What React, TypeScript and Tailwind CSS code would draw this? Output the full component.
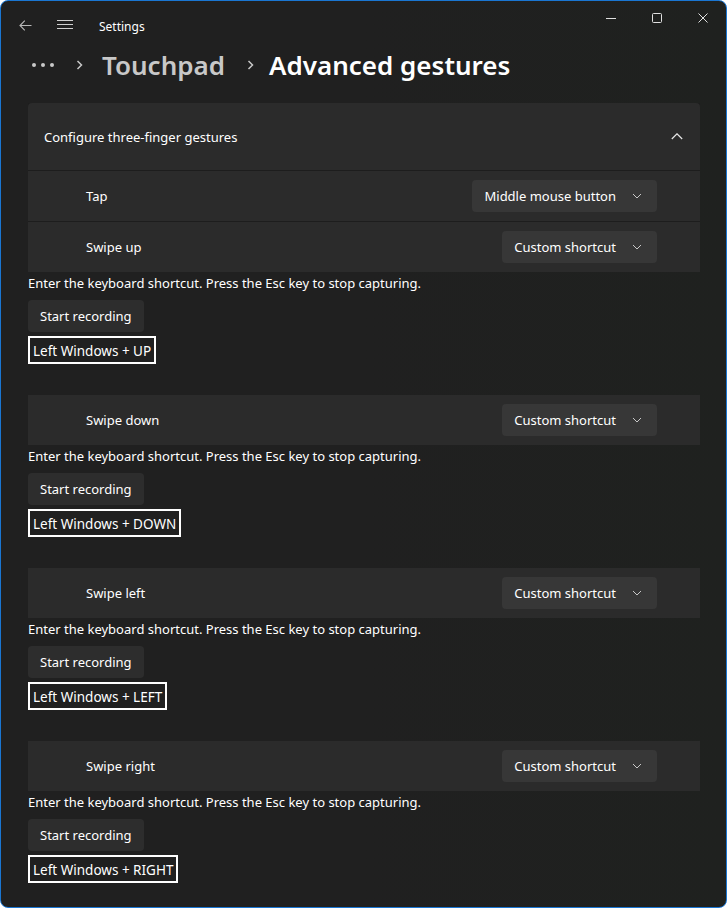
import React from "react";

const FONT = { fontFamily: '"Noto Sans", "Open Sans", sans-serif' };

function ChevronDown() {
  return (
    <svg width="10" height="6" viewBox="0 0 10 6" className="block">
      <path d="M1 1 L5 5 L9 1" fill="none" stroke="#c8c8c8" strokeWidth="1" />
    </svg>
  );
}

function Dropdown({ label }: { label: string }) {
  return (
    <div className="flex h-[32px] items-center rounded-[4px] bg-[#373737] pl-[12px] pr-[15px] text-[13px] text-white">
      <span className="pt-[2px]">{label}</span>
      <span className="ml-[16px]">
        <ChevronDown />
      </span>
    </div>
  );
}

function Row({ label, value }: { label: string; value: string }) {
  return (
    <div className="flex h-[50px] items-center justify-between bg-[#2b2b2b] pl-[58px] pr-[43px]">
      <span className="pt-[2px] text-[13px] text-white">{label}</span>
      <Dropdown label={value} />
    </div>
  );
}

function Capture({ shortcut, last }: { shortcut: string; last?: boolean }) {
  return (
    <div className={last ? "" : "mb-[31px]"}>
      <div className="mt-[1px] flex h-[20px] items-center pt-[2px] text-[13px] text-white">
        Enter the keyboard shortcut. Press the Esc key to stop capturing.
      </div>
      <div className="mt-[7px] flex">
        <div className="flex h-[32px] items-center rounded-[4px] bg-[#2d2d2d] px-[12px] pt-[2px] text-[13px] text-white">
          Start recording
        </div>
      </div>
      <div className="mt-[4px] flex">
        <div className="flex h-[28px] items-center border-2 border-white px-[3px] pt-[2px] text-[13.5px] text-white">
          {shortcut}
        </div>
      </div>
    </div>
  );
}

export default function App() {
  return (
    <div
      style={FONT}
      className="h-[908px] w-[727px] overflow-hidden rounded-[8px] border border-[#1a76d2] bg-[linear-gradient(90deg,#202020_0%,#202020_50%,#1f211f_100%)]"
    >
      {/* Title bar */}
      <div className="flex h-[44px] justify-between">
        <div className="flex h-[48px] items-center">
          <div className="ml-[17px] flex w-[14px] justify-center">
            <svg width="13" height="11" viewBox="0 0 13 11">
              <path d="M12.5 5.5 H1 M5.8 0.7 L1 5.5 L5.8 10.3" fill="none" stroke="#b8b8b8" strokeWidth="1.1" />
            </svg>
          </div>
          <div className="ml-[25px]">
            <svg width="16" height="10" viewBox="0 0 16 10" className="block">
              <path d="M0 0.5 H16 M0 4.5 H16 M0 8.5 H16" fill="none" stroke="#d0d0d0" strokeWidth="1.1" />
            </svg>
          </div>
          <span className="ml-[26px] mt-[3px] text-[12px] text-white">Settings</span>
        </div>
        <div className="flex h-[33px] items-center">
          <div className="flex w-[46px] justify-center">
            <svg width="10" height="10" viewBox="0 0 10 10">
              <path d="M0 5.5 H10" stroke="#e0e0e0" strokeWidth="1" />
            </svg>
          </div>
          <div className="flex w-[46px] justify-center">
            <svg width="10" height="10" viewBox="0 0 10 10">
              <rect x="0.5" y="0.5" width="9" height="9" rx="1" fill="none" stroke="#e0e0e0" strokeWidth="1" />
            </svg>
          </div>
          <div className="flex w-[46px] justify-center">
            <svg width="10" height="10" viewBox="0 0 10 10">
              <path d="M0.5 0.5 L9.5 9.5 M9.5 0.5 L0.5 9.5" stroke="#e0e0e0" strokeWidth="1" />
            </svg>
          </div>
        </div>
      </div>

      {/* Breadcrumb */}
      <div className="flex h-[40px] items-center pl-[31px]">
        <div className="flex items-center gap-[5px]">
          <span className="block h-[4px] w-[4px] rounded-full bg-[#c8c8c8]" />
          <span className="block h-[4px] w-[4px] rounded-full bg-[#c8c8c8]" />
          <span className="block h-[4px] w-[4px] rounded-full bg-[#c8c8c8]" />
        </div>
        <svg width="8" height="10" viewBox="0 0 8 10" className="ml-[22px]">
          <path d="M1.5 1 L5.5 5 L1.5 9" fill="none" stroke="#c8c8c8" strokeWidth="1.5" />
        </svg>
        <span className="ml-[18px] text-[26px] font-semibold leading-none text-[#c8c8c8]">Touchpad</span>
        <svg width="8" height="10" viewBox="0 0 8 10" className="ml-[22px]">
          <path d="M1.5 1 L5.5 5 L1.5 9" fill="none" stroke="#c8c8c8" strokeWidth="1.5" />
        </svg>
        <span className="ml-[14px] text-[26px] font-semibold leading-none text-white">Advanced gestures</span>
      </div>

      {/* Content */}
      <div className="mt-[18px] pl-[27px] pr-[26px]">
        <div className="flex flex-col gap-[1px] bg-[#1d1d1d]">
          <div className="flex h-[67px] items-center justify-between rounded-t-[4px] bg-[#2b2b2b] pl-[16px] pr-[17px]">
            <span className="pt-[2px] text-[13px] text-white">Configure three-finger gestures</span>
            <svg width="12" height="7" viewBox="0 0 12 7">
              <path d="M0.8 6 L6 0.8 L11.2 6" fill="none" stroke="#e8e8e8" strokeWidth="1.2" />
            </svg>
          </div>
          <Row label="Tap" value="Middle mouse button" />
          <Row label="Swipe up" value="Custom shortcut" />
        </div>
        <Capture shortcut="Left Windows + UP" />
        <Row label="Swipe down" value="Custom shortcut" />
        <Capture shortcut="Left Windows + DOWN" />
        <Row label="Swipe left" value="Custom shortcut" />
        <Capture shortcut="Left Windows + LEFT" />
        <Row label="Swipe right" value="Custom shortcut" />
        <Capture shortcut="Left Windows + RIGHT" last />
      </div>
    </div>
  );
}
